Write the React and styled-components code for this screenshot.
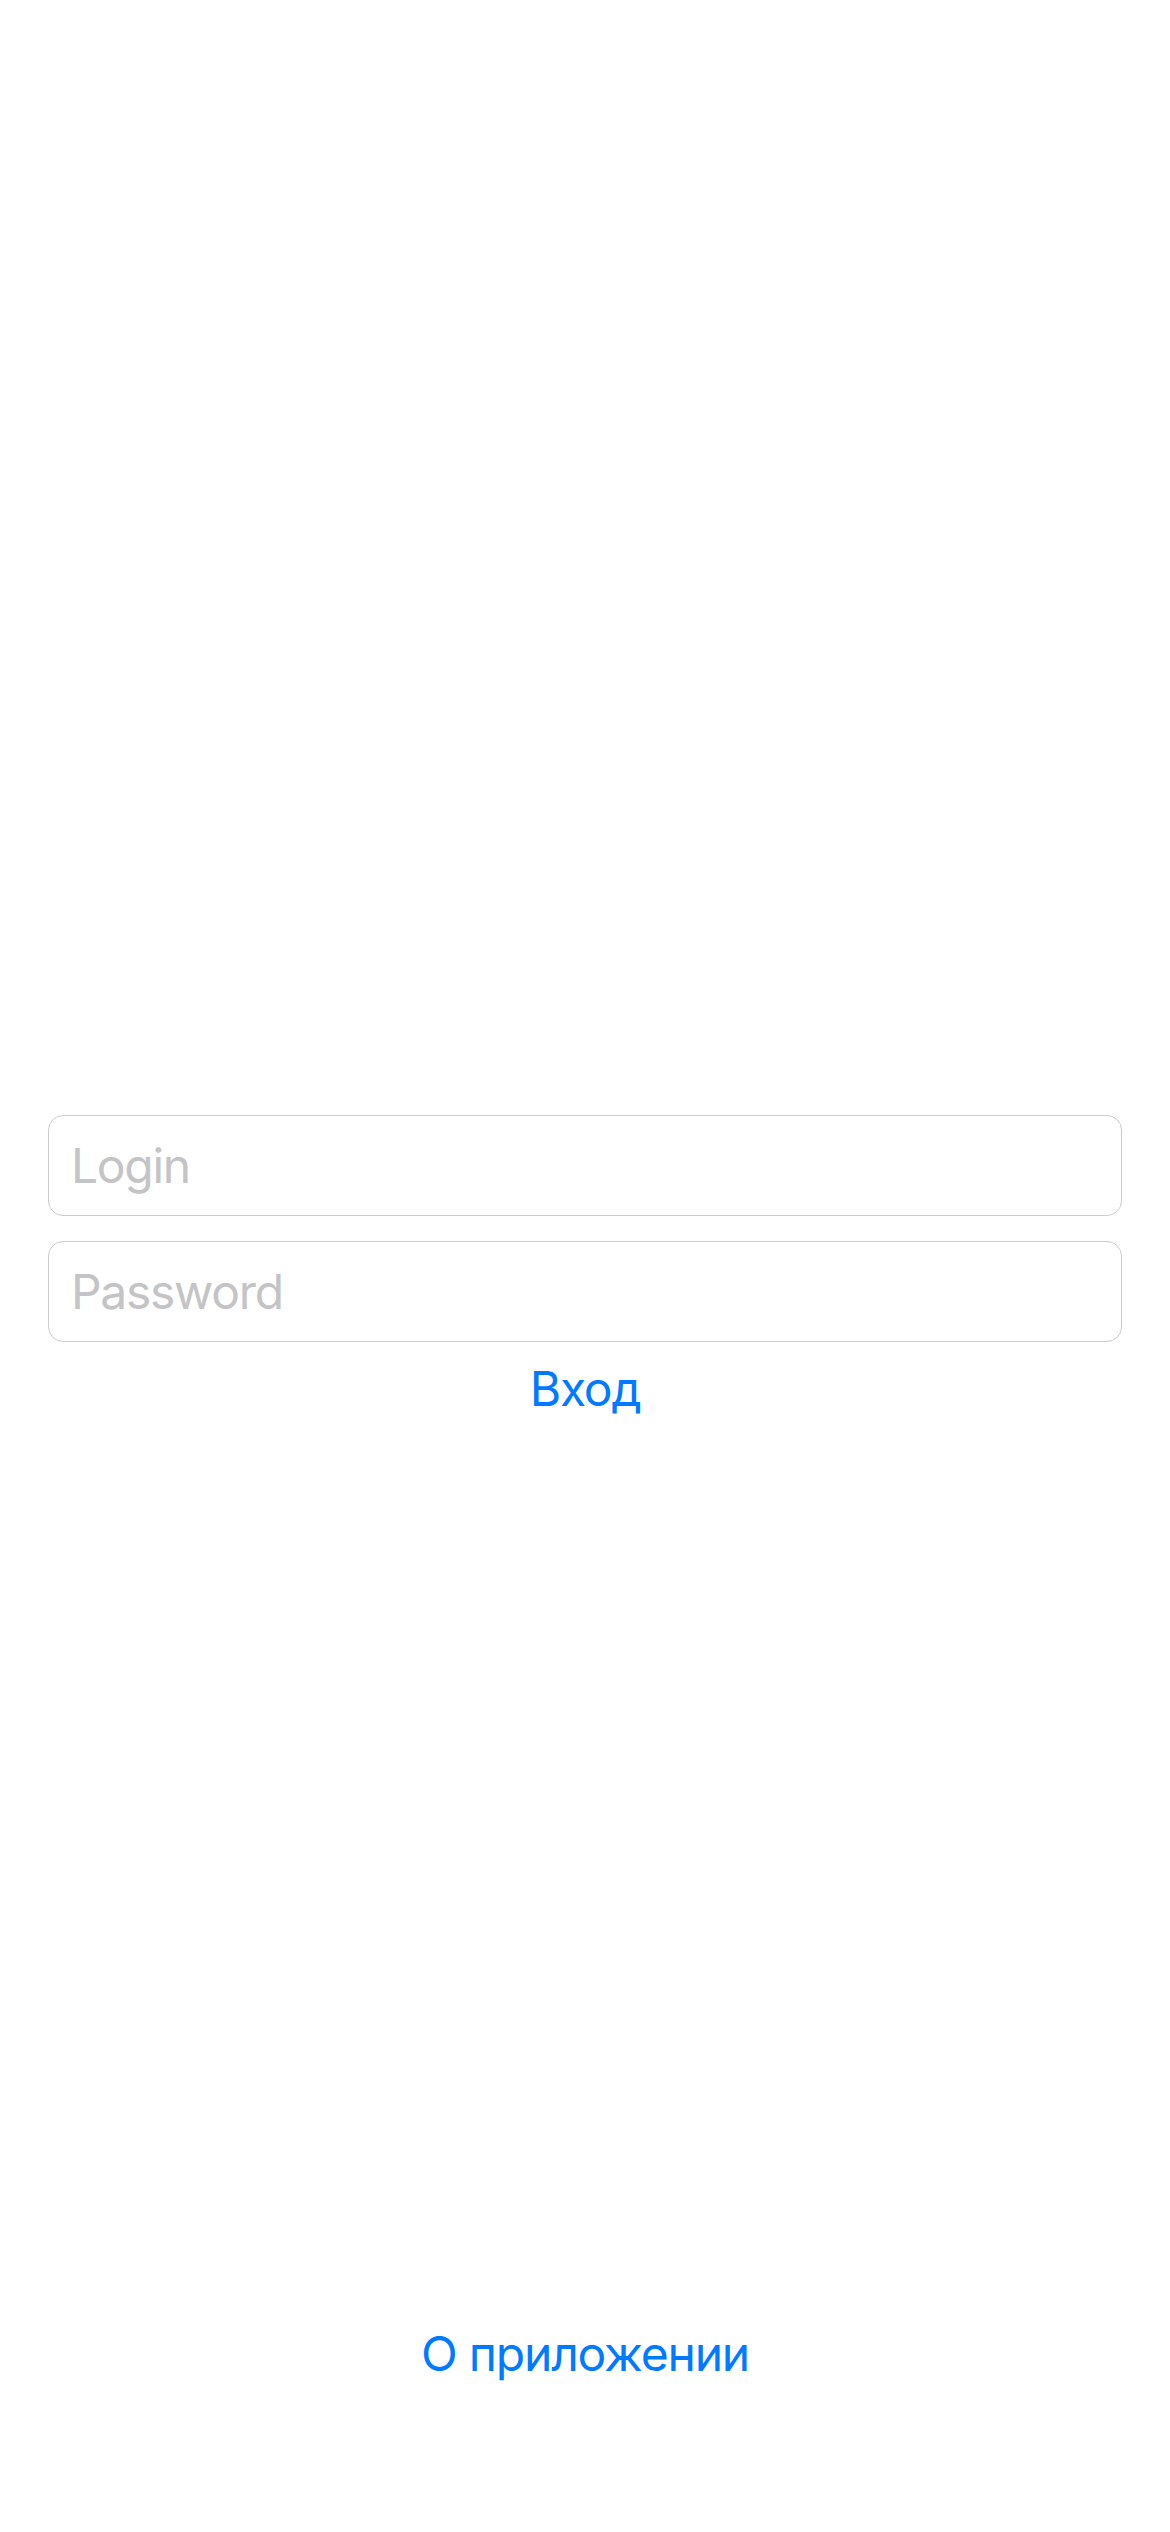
import styled, { createGlobalStyle } from 'styled-components';

const GlobalStyle = createGlobalStyle`
  html, body {
    margin: 0;
    padding: 0;
    background: #ffffff;
  }

  body {
    font-family: Inter, 'Noto Sans', sans-serif;
    -webkit-font-smoothing: antialiased;
  }
`;

const Screen = styled.main`
  min-height: 2532px;
  display: flex;
  flex-direction: column;
  background: #ffffff;
`;

const Form = styled.form`
  display: flex;
  flex-direction: column;
  align-items: center;
  gap: 25px;
  margin-top: 1115px;
  padding: 0 48px;
`;

const Field = styled.input`
  box-sizing: border-box;
  width: 100%;
  height: 101px;
  padding: 0 22px;
  border: 1px solid #cbcbcd;
  border-radius: 15px;
  background: #ffffff;
  font-family: Inter, 'Noto Sans', sans-serif;
  font-size: 48px;
  letter-spacing: -1.3px;
  color: #000000;
  outline: none;

  &::placeholder {
    color: #c4c4c6;
  }
`;

const LinkButton = styled.button`
  border: none;
  background: none;
  padding: 0;
  margin-top: ${(p) => p.$offset || 0}px;
  font-family: Inter, 'Noto Sans', sans-serif;
  font-size: 48px;
  line-height: 60px;
  letter-spacing: -1.2px;
  color: #007aff;
  cursor: pointer;
`;

const Spacer = styled.div`
  flex: 1;
`;

const Footer = styled.footer`
  display: flex;
  justify-content: center;
  padding-bottom: 148px;
`;

export default function App() {
  return (
    <>
      <GlobalStyle />
      <Screen>
        <Form onSubmit={(e) => e.preventDefault()}>
          <Field type="text" placeholder="Login" />
          <Field type="password" placeholder="Password" />
          <LinkButton type="submit" $offset={-8}>
            Вход
          </LinkButton>
        </Form>
        <Spacer />
        <Footer>
          <LinkButton type="button">О приложении</LinkButton>
        </Footer>
      </Screen>
    </>
  );
}
